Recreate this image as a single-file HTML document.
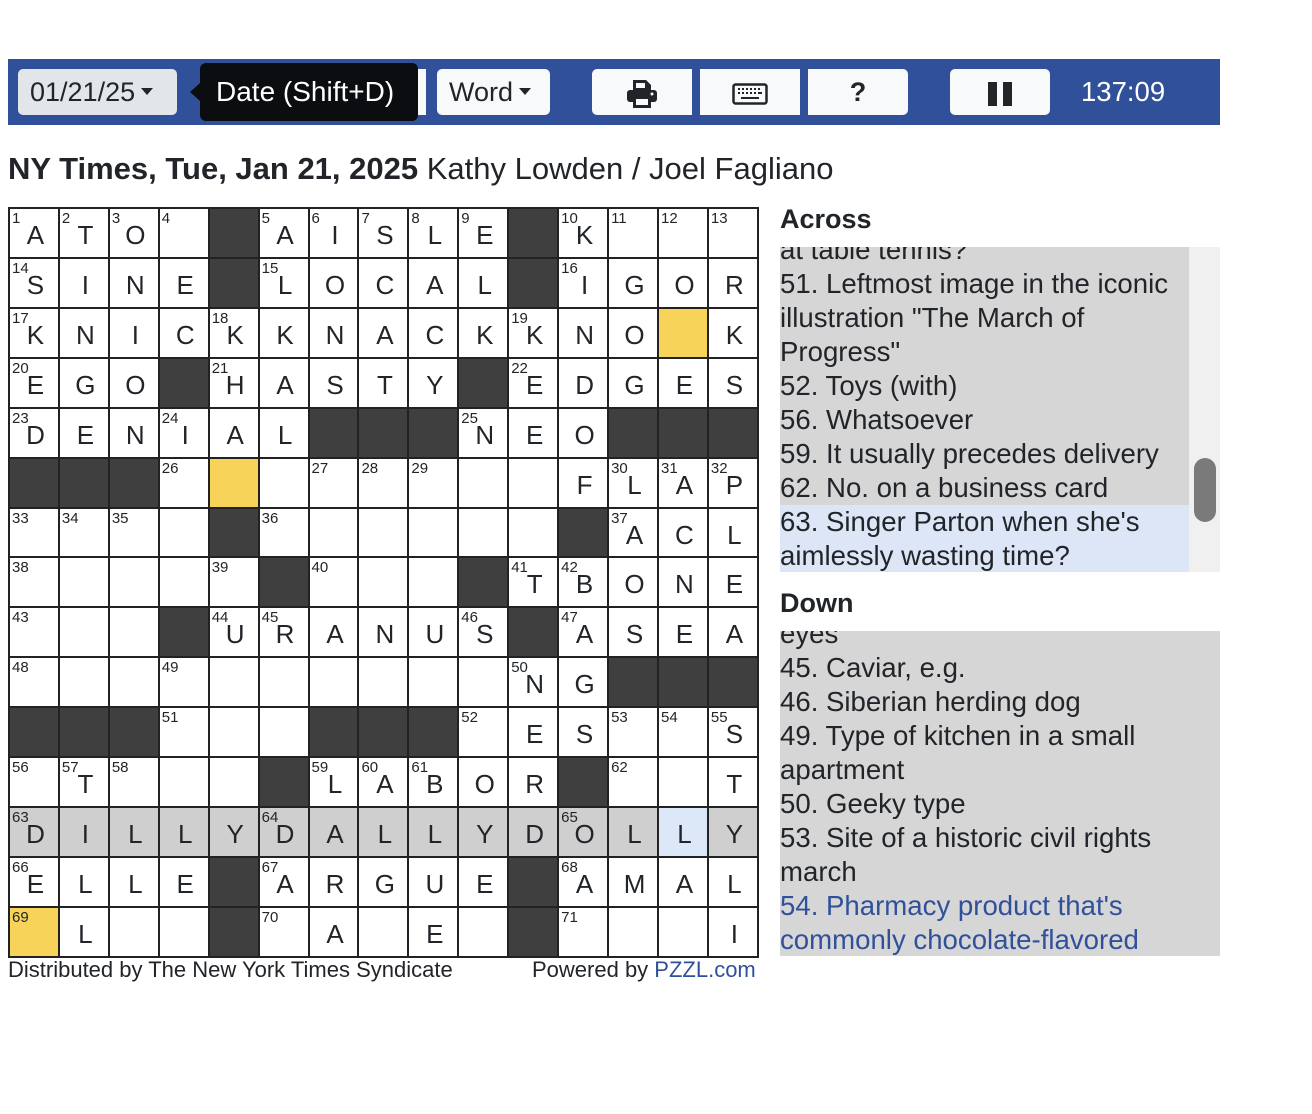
<!DOCTYPE html>
<html><head><meta charset="utf-8"><style>
*{margin:0;padding:0;box-sizing:border-box}
body{width:1312px;height:1114px;background:#fff;font-family:"Liberation Sans",Arial,sans-serif;color:#212529;position:relative;overflow:hidden}
.bar{position:absolute;left:8px;top:59px;width:1212px;height:66px;background:#30509a}
.btn{position:absolute;top:10px;height:46px;background:#f8f9fa;border-radius:5px;font-size:27px;line-height:46px;color:#212529}
.tip{position:absolute;left:200px;top:63px;width:218px;height:58px;background:#0b0d10;border-radius:6px;color:#fff;font-size:28px;line-height:58px;padding-left:16px}
.tip:before{content:"";position:absolute;left:-10px;top:20px;border:9px solid transparent;border-right:10px solid #0b0d10;border-left:0}
.car{display:inline-block;border-left:6px solid transparent;border-right:6px solid transparent;border-top:7px solid #212529;vertical-align:middle;margin-left:6px;margin-top:-4px}
h1{position:absolute;left:8px;top:151px;font-size:31px;font-weight:normal;white-space:nowrap}
.grid{position:absolute;left:8px;top:207px;width:751px;height:751px;background:#222;padding:2px;display:grid;grid-template-columns:repeat(15,47.93px);grid-template-rows:repeat(15,47.93px);gap:2px}
.grid i{font-style:normal;background:#fff;position:relative;font-size:26px;text-align:center;line-height:48px;padding-top:2px;padding-left:3px}
.grid i.b{background:#3f3f3f}.grid i.y{background:#f7d35a}.grid i.g{background:#cfcfcf}.grid i.l{background:#dce7f7}
.grid s{text-decoration:none;position:absolute;left:2px;top:2px;font-size:15px;line-height:15px}
.foot{position:absolute;top:957px;font-size:22px;line-height:26px}
.hd{position:absolute;left:780px;font-size:27px;font-weight:bold}
.box{position:absolute;left:780px;width:440px;height:325px;background:#d6d6d6;overflow:hidden;font-size:27.6px;line-height:34px}
.box div{position:absolute;left:0;top:-14px;width:409px}
.box p{padding-right:2px}
</style></head><body>
<div class="bar">
<div class="btn" style="left:10px;width:159px;background:#e2e5ea;padding-left:12px">01/21/25<span class="car"></span></div>
<div class="btn" style="left:390px;width:28px;border-radius:0"></div>
<div class="btn" style="left:429px;width:113px;padding-left:12px">Word<span class="car"></span></div>
<div class="btn" style="left:584px;width:100px;border-radius:5px 0 0 5px;text-align:center"><svg width="34" height="32" viewBox="0 0 34 32" style="vertical-align:middle"><path d="M8 2h13l5 5v6H8z" fill="#212529"/><path d="M11 5h9v5h-9z" fill="#f8f9fa"/><rect x="2" y="12" width="30" height="12" rx="3" fill="#212529"/><rect x="8" y="19" width="18" height="11" fill="#212529"/><rect x="11" y="21" width="12" height="6" fill="#f8f9fa"/><circle cx="27" cy="16" r="1.5" fill="#f8f9fa"/></svg></div>
<div class="btn" style="left:692px;width:100px;border-radius:0;text-align:center"><svg width="36" height="22" viewBox="0 0 36 22" style="vertical-align:middle"><rect x="1.5" y="1.5" width="33" height="19" rx="2" fill="none" stroke="#212529" stroke-width="2.5"/><path d="M6 6h2M10 6h2M14 6h2M18 6h2M22 6h2M26 6h2M6 10h2M10 10h2M14 10h2M18 10h2M22 10h2M26 10h4M9 15h18" stroke="#212529" stroke-width="2"/></svg></div>
<div class="btn" style="left:800px;width:100px;border-radius:0 5px 5px 0;text-align:center;font-weight:bold">?</div>
<div class="btn" style="left:942px;width:100px;text-align:center"><span style="display:inline-block;width:9px;height:24px;background:#212529;vertical-align:middle;margin-right:6px"></span><span style="display:inline-block;width:9px;height:24px;background:#212529;vertical-align:middle"></span></div>
<div style="position:absolute;left:1073px;top:10px;line-height:46px;font-size:27.5px;color:#fff">137:09</div>
</div>
<div class="tip">Date (Shift+D)</div>
<h1><b>NY Times, Tue, Jan 21, 2025</b> Kathy Lowden / Joel Fagliano</h1>
<div class="grid">
<i><s>1</s>A</i><i><s>2</s>T</i><i><s>3</s>O</i><i><s>4</s></i><i class="b"></i><i><s>5</s>A</i><i><s>6</s>I</i><i><s>7</s>S</i><i><s>8</s>L</i><i><s>9</s>E</i><i class="b"></i><i><s>10</s>K</i><i><s>11</s></i><i><s>12</s></i><i><s>13</s></i>
<i><s>14</s>S</i><i>I</i><i>N</i><i>E</i><i class="b"></i><i><s>15</s>L</i><i>O</i><i>C</i><i>A</i><i>L</i><i class="b"></i><i><s>16</s>I</i><i>G</i><i>O</i><i>R</i>
<i><s>17</s>K</i><i>N</i><i>I</i><i>C</i><i><s>18</s>K</i><i>K</i><i>N</i><i>A</i><i>C</i><i>K</i><i><s>19</s>K</i><i>N</i><i>O</i><i class="y"></i><i>K</i>
<i><s>20</s>E</i><i>G</i><i>O</i><i class="b"></i><i><s>21</s>H</i><i>A</i><i>S</i><i>T</i><i>Y</i><i class="b"></i><i><s>22</s>E</i><i>D</i><i>G</i><i>E</i><i>S</i>
<i><s>23</s>D</i><i>E</i><i>N</i><i><s>24</s>I</i><i>A</i><i>L</i><i class="b"></i><i class="b"></i><i class="b"></i><i><s>25</s>N</i><i>E</i><i>O</i><i class="b"></i><i class="b"></i><i class="b"></i>
<i class="b"></i><i class="b"></i><i class="b"></i><i><s>26</s></i><i class="y"></i><i></i><i><s>27</s></i><i><s>28</s></i><i><s>29</s></i><i></i><i></i><i>F</i><i><s>30</s>L</i><i><s>31</s>A</i><i><s>32</s>P</i>
<i><s>33</s></i><i><s>34</s></i><i><s>35</s></i><i></i><i class="b"></i><i><s>36</s></i><i></i><i></i><i></i><i></i><i></i><i class="b"></i><i><s>37</s>A</i><i>C</i><i>L</i>
<i><s>38</s></i><i></i><i></i><i></i><i><s>39</s></i><i class="b"></i><i><s>40</s></i><i></i><i></i><i class="b"></i><i><s>41</s>T</i><i><s>42</s>B</i><i>O</i><i>N</i><i>E</i>
<i><s>43</s></i><i></i><i></i><i class="b"></i><i><s>44</s>U</i><i><s>45</s>R</i><i>A</i><i>N</i><i>U</i><i><s>46</s>S</i><i class="b"></i><i><s>47</s>A</i><i>S</i><i>E</i><i>A</i>
<i><s>48</s></i><i></i><i></i><i><s>49</s></i><i></i><i></i><i></i><i></i><i></i><i></i><i><s>50</s>N</i><i>G</i><i class="b"></i><i class="b"></i><i class="b"></i>
<i class="b"></i><i class="b"></i><i class="b"></i><i><s>51</s></i><i></i><i></i><i class="b"></i><i class="b"></i><i class="b"></i><i><s>52</s></i><i>E</i><i>S</i><i><s>53</s></i><i><s>54</s></i><i><s>55</s>S</i>
<i><s>56</s></i><i><s>57</s>T</i><i><s>58</s></i><i></i><i></i><i class="b"></i><i><s>59</s>L</i><i><s>60</s>A</i><i><s>61</s>B</i><i>O</i><i>R</i><i class="b"></i><i><s>62</s></i><i></i><i>T</i>
<i class="g"><s>63</s>D</i><i class="g">I</i><i class="g">L</i><i class="g">L</i><i class="g">Y</i><i class="g"><s>64</s>D</i><i class="g">A</i><i class="g">L</i><i class="g">L</i><i class="g">Y</i><i class="g">D</i><i class="g"><s>65</s>O</i><i class="g">L</i><i class="l">L</i><i class="g">Y</i>
<i><s>66</s>E</i><i>L</i><i>L</i><i>E</i><i class="b"></i><i><s>67</s>A</i><i>R</i><i>G</i><i>U</i><i>E</i><i class="b"></i><i><s>68</s>A</i><i>M</i><i>A</i><i>L</i>
<i class="y"><s>69</s></i><i>L</i><i></i><i></i><i class="b"></i><i><s>70</s></i><i>A</i><i></i><i>E</i><i></i><i class="b"></i><i><s>71</s></i><i></i><i></i><i>I</i>
</div>
<div class="foot" style="left:8px">Distributed by The New York Times Syndicate</div>
<div class="foot" style="left:532px">Powered by <span style="color:#30509a">PZZL.com</span></div>
<div class="hd" style="top:204px">Across</div>
<div class="box" style="top:247px;background:#f0f0f0">
<div style="background:#d6d6d6">
<p>at table tennis?</p>
<p>51. Leftmost image in the iconic illustration "The March of Progress"</p>
<p>52. Toys (with)</p>
<p>56. Whatsoever</p>
<p>59. It usually precedes delivery</p>
<p>62. No. on a business card</p>
<p style="background:#dce6f6">63. Singer Parton when she's aimlessly wasting time?</p>
</div>
<span style="position:absolute;left:414px;top:211px;width:22px;height:64px;border-radius:11px;background:#7a7a7a"></span>
</div>
<div class="hd" style="top:588px">Down</div>
<div class="box" style="top:631px">
<div style="width:440px">
<p>eyes</p>
<p>45. Caviar, e.g.</p>
<p>46. Siberian herding dog</p>
<p>49. Type of kitchen in a small apartment</p>
<p>50. Geeky type</p>
<p>53. Site of a historic civil rights march</p>
<p style="color:#30509a">54. Pharmacy product that's commonly chocolate-flavored</p>
</div>
</div>
</body></html>
